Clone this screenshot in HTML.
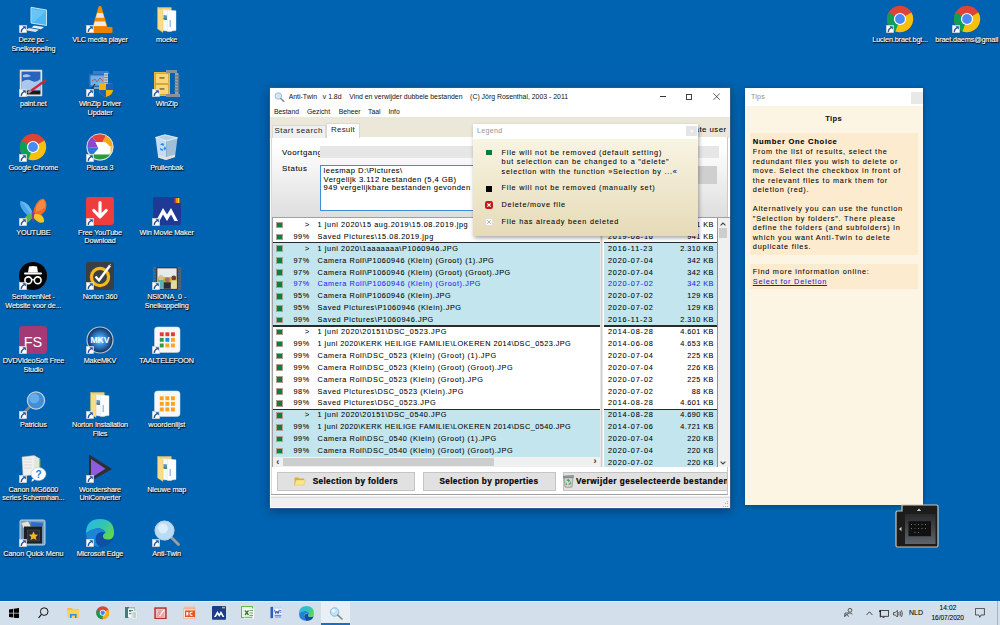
<!DOCTYPE html><html><head><meta charset="utf-8"><style>
*{margin:0;padding:0;box-sizing:border-box}
html,body{width:1000px;height:625px;overflow:hidden}
body{background:#0063b1;position:relative;font-family:"Liberation Sans",sans-serif;-webkit-text-stroke:.06px currentColor}
.a{position:absolute}
.lbl{position:absolute;width:80px;text-align:center;color:#fff;font-size:7.3px;line-height:8.9px;letter-spacing:-.15px;
 text-shadow:0 0 1px #000,0.5px 0.5px 1px #000,1px 1px 1px rgba(0,0,0,.5);white-space:nowrap;-webkit-text-stroke:.15px #fff}
.ico{position:absolute;width:28px;height:28px}
.sc{position:absolute;left:0;bottom:0;width:8px;height:8px;background:#fff;border:0.5px solid #aaa}
.win{position:absolute;background:#fff}
.t7{font-size:7px}
.vd{font-size:7.3px}
</style></head><body>
<div class="ico" style="left:19.33px;top:4.50px"><svg class="a" style="left:0;top:0" width="28" height="28" viewBox="0 0 28 28"><path d="M12 2.3 L27.5 5 V20.5 L12 18Z" fill="#4cb7f3" stroke="#d4ecfb" stroke-width="0.9"/><path d="M13 4 L26.5 6.3 L15 17 L13 16.6Z" fill="#7ccdf8" opacity=".6"/><path d="M15 20.5 L25 22 L22 24.3 L12.5 22.6Z" fill="#e9eef2"/><path d="M10 23 L20 24.7 L16.5 27 L6.5 25.2Z" fill="#dfe3e8"/></svg><svg class="a" style="left:-0.5px;top:20.5px" width="8" height="8" viewBox="0 0 8 8"><rect x="0.3" y="0.3" width="7.4" height="7.4" fill="#fff" stroke="#c8c8c8" stroke-width="0.5"/><path d="M3.4 1.2 H6.8 V4.6Z" fill="#1f4f9a"/><path d="M5.3 2.7 Q2.6 3.6 2.2 6.9" stroke="#1f4f9a" stroke-width="1.3" fill="none"/></svg></div>
<div class="lbl" style="left:-6.67px;top:35.80px">Deze pc -<br>Snelkoppeling</div>
<div class="ico" style="left:19.33px;top:68.75px"><svg class="a" style="left:0;top:0" width="28" height="28" viewBox="0 0 28 28"><rect x="1" y="1" width="22" height="26" fill="#f4f4f4" stroke="#b8b8b8" stroke-width=".6"/><rect x="2.5" y="2.5" width="19" height="19" fill="#2a62c0"/><path d="M2.5 13 Q8 9 13 12 Q17 14 21.5 10 V21.5 H2.5Z" fill="#a9c9ec"/><path d="M4 6 Q9 4 12 7 Q8 9 4 8Z" fill="#cfe0f4" opacity=".8"/><rect x="2.5" y="21.5" width="19" height="4" fill="#1a1a1a"/><path d="M9 24 L27 11" stroke="#c8283c" stroke-width="2.2"/><path d="M9 24 L12 21.6" stroke="#999" stroke-width="2.2"/></svg><svg class="a" style="left:-0.5px;top:20.5px" width="8" height="8" viewBox="0 0 8 8"><rect x="0.3" y="0.3" width="7.4" height="7.4" fill="#fff" stroke="#c8c8c8" stroke-width="0.5"/><path d="M3.4 1.2 H6.8 V4.6Z" fill="#1f4f9a"/><path d="M5.3 2.7 Q2.6 3.6 2.2 6.9" stroke="#1f4f9a" stroke-width="1.3" fill="none"/></svg></div>
<div class="lbl" style="left:-6.67px;top:100.05px">paint.net</div>
<div class="ico" style="left:19.33px;top:133.00px"><svg class="a" style="left:0;top:0" width="28" height="28" viewBox="0 0 28 28"><circle cx="14" cy="14" r="13.2" fill="#db4437"/><path d="M14 14 L2.6 7.4 A13.2 13.2 0 0 0 14 27.2 Z" fill="#0f9d58"/><path d="M14 14 L9 22.6 A13.2 13.2 0 0 0 14 27.2Z" fill="#0f9d58"/><path d="M14 14 L25.4 7.4 A13.2 13.2 0 0 1 9.4 26.4 Z" fill="#f4c20d"/><circle cx="14" cy="14" r="6.1" fill="#fff"/><circle cx="14" cy="14" r="4.9" fill="#4a8af4"/></svg><svg class="a" style="left:-0.5px;top:20.5px" width="8" height="8" viewBox="0 0 8 8"><rect x="0.3" y="0.3" width="7.4" height="7.4" fill="#fff" stroke="#c8c8c8" stroke-width="0.5"/><path d="M3.4 1.2 H6.8 V4.6Z" fill="#1f4f9a"/><path d="M5.3 2.7 Q2.6 3.6 2.2 6.9" stroke="#1f4f9a" stroke-width="1.3" fill="none"/></svg></div>
<div class="lbl" style="left:-6.67px;top:164.30px">Google Chrome</div>
<div class="ico" style="left:19.33px;top:197.25px"><svg class="a" style="left:0;top:0" width="28" height="28" viewBox="0 0 28 28"><path d="M14 17 Q10 5 1.5 4 Q0 7 3 12 Q7 19 14 21Z" fill="#4aa8e8"/><path d="M14 17 Q10 5 1.5 4 Q6 8 14 21Z" fill="#7cc4f0" opacity=".6"/><path d="M14 17 Q16 3 24 1.5 Q28.5 4 27 12 Q24 19 14 21Z" fill="#f06a28"/><path d="M17 10 Q20 3 24.5 2.5 Q27 5 26 10 Q22 14 17 15Z" fill="#f59a4a" opacity=".7"/><path d="M14 20 Q9 27 5.5 26 Q4 21 9 17.5 Q12 16.5 14 18Z" fill="#5ab848"/><path d="M14 20 Q20 28 25 25 Q26 19 19 17 Q16 16.5 14 18Z" fill="#f7c520"/><path d="M12.5 15 L15.5 15 L14.5 25 L13.5 25Z" fill="#8040a0"/></svg><svg class="a" style="left:-0.5px;top:20.5px" width="8" height="8" viewBox="0 0 8 8"><rect x="0.3" y="0.3" width="7.4" height="7.4" fill="#fff" stroke="#c8c8c8" stroke-width="0.5"/><path d="M3.4 1.2 H6.8 V4.6Z" fill="#1f4f9a"/><path d="M5.3 2.7 Q2.6 3.6 2.2 6.9" stroke="#1f4f9a" stroke-width="1.3" fill="none"/></svg></div>
<div class="lbl" style="left:-6.67px;top:228.55px">YOUTUBE</div>
<div class="ico" style="left:19.33px;top:261.50px"><svg class="a" style="left:0;top:0" width="28" height="28" viewBox="0 0 28 28"><circle cx="14" cy="14" r="14" fill="#050505"/><path d="M9 10.5 L10 4.5 Q14 3.5 18 4.5 L19 10.5Z" fill="#fff"/><rect x="5" y="10.5" width="18" height="2" rx="1" fill="#fff"/><circle cx="9.3" cy="18.3" r="3.4" fill="none" stroke="#fff" stroke-width="1.6"/><circle cx="18.7" cy="18.3" r="3.4" fill="none" stroke="#fff" stroke-width="1.6"/><path d="M12.7 18 Q14 17 15.3 18" stroke="#fff" stroke-width="1.2" fill="none"/></svg><svg class="a" style="left:-0.5px;top:20.5px" width="8" height="8" viewBox="0 0 8 8"><rect x="0.3" y="0.3" width="7.4" height="7.4" fill="#fff" stroke="#c8c8c8" stroke-width="0.5"/><path d="M3.4 1.2 H6.8 V4.6Z" fill="#1f4f9a"/><path d="M5.3 2.7 Q2.6 3.6 2.2 6.9" stroke="#1f4f9a" stroke-width="1.3" fill="none"/></svg></div>
<div class="lbl" style="left:-6.67px;top:292.80px">SeniorenNet -<br>Website voor de...</div>
<div class="ico" style="left:19.33px;top:325.75px"><svg class="a" style="left:0;top:0" width="28" height="28" viewBox="0 0 28 28"><rect x="0" y="0" width="28" height="28" rx="3.5" fill="#a33a74"/><text x="14" y="20.5" font-family="Liberation Sans" font-size="14.5" fill="#fff" text-anchor="middle">FS</text></svg><svg class="a" style="left:-0.5px;top:20.5px" width="8" height="8" viewBox="0 0 8 8"><rect x="0.3" y="0.3" width="7.4" height="7.4" fill="#fff" stroke="#c8c8c8" stroke-width="0.5"/><path d="M3.4 1.2 H6.8 V4.6Z" fill="#1f4f9a"/><path d="M5.3 2.7 Q2.6 3.6 2.2 6.9" stroke="#1f4f9a" stroke-width="1.3" fill="none"/></svg></div>
<div class="lbl" style="left:-6.67px;top:357.05px">DVDVideoSoft Free<br>Studio</div>
<div class="ico" style="left:19.33px;top:390.00px"><svg class="a" style="left:0;top:0" width="28" height="28" viewBox="0 0 28 28"><path d="M10.5 17 L4.5 23.5" stroke="#7d8790" stroke-width="2.6" stroke-linecap="round"/><circle cx="17" cy="10.5" r="8.6" fill="#3f8fd8" stroke="#c4d4e4" stroke-width="1.2"/><circle cx="15.3" cy="8.5" r="5" fill="#7ab8ec" opacity=".7"/></svg><svg class="a" style="left:-0.5px;top:20.5px" width="8" height="8" viewBox="0 0 8 8"><rect x="0.3" y="0.3" width="7.4" height="7.4" fill="#fff" stroke="#c8c8c8" stroke-width="0.5"/><path d="M3.4 1.2 H6.8 V4.6Z" fill="#1f4f9a"/><path d="M5.3 2.7 Q2.6 3.6 2.2 6.9" stroke="#1f4f9a" stroke-width="1.3" fill="none"/></svg></div>
<div class="lbl" style="left:-6.67px;top:421.30px">Patricius</div>
<div class="ico" style="left:19.33px;top:454.25px"><svg class="a" style="left:0;top:0" width="28" height="28" viewBox="0 0 28 28"><path d="M3 3 L15 1.5 L21 5 V20 L4 22Z" fill="#f0f0f0" stroke="#bbb" stroke-width=".5"/><path d="M15 1.5 L21 5 V20 L15 17Z" fill="#dfe8df"/><path d="M21 5 V20" stroke="#3a8a4a" stroke-width="1"/><path d="M5 5 h8 M5 8 h8 M5 11 h8 M5 14 h8" stroke="#ccc" stroke-width=".6"/><ellipse cx="19.5" cy="20" rx="7.5" ry="6.5" fill="#fff" stroke="#c0c8d0" stroke-width=".6"/><path d="M13 25 L12.5 28 L16 25.5Z" fill="#fff"/><text x="19.5" y="24.3" font-family="Liberation Sans" font-weight="bold" font-size="10" fill="#2a7ae0" text-anchor="middle">?</text></svg><svg class="a" style="left:-0.5px;top:20.5px" width="8" height="8" viewBox="0 0 8 8"><rect x="0.3" y="0.3" width="7.4" height="7.4" fill="#fff" stroke="#c8c8c8" stroke-width="0.5"/><path d="M3.4 1.2 H6.8 V4.6Z" fill="#1f4f9a"/><path d="M5.3 2.7 Q2.6 3.6 2.2 6.9" stroke="#1f4f9a" stroke-width="1.3" fill="none"/></svg></div>
<div class="lbl" style="left:-6.67px;top:485.55px">Canon MG6600<br>series Schermhan...</div>
<div class="ico" style="left:19.33px;top:518.50px"><svg class="a" style="left:0;top:0" width="28" height="28" viewBox="0 0 28 28"><rect x="1" y="1" width="25" height="25" rx="1.5" fill="#86acc8" stroke="#b8d0e4" stroke-width="1"/><rect x="2.5" y="2.5" width="22" height="22" fill="#6a94b8"/><path d="M12 3 L24 4 L23.5 7.5 L11.5 7Z" fill="#2f6ad8"/><path d="M2.5 4 L9 2.5 L12 8 L4.5 9Z" fill="#e8e4d4"/><rect x="5" y="7.5" width="18" height="17" fill="#1c1f24"/><rect x="8.5" y="11" width="12" height="11" fill="#2a2f36" stroke="#4a5058" stroke-width=".6"/><path d="M14.5 12.5 l1.4 3 l3.2 .3 l-2.4 2.1 l.8 3.2 l-3 -1.7 l-3 1.7 l.8 -3.2 l-2.4 -2.1 l3.2 -.3z" fill="#f7b81c"/></svg><svg class="a" style="left:-0.5px;top:20.5px" width="8" height="8" viewBox="0 0 8 8"><rect x="0.3" y="0.3" width="7.4" height="7.4" fill="#fff" stroke="#c8c8c8" stroke-width="0.5"/><path d="M3.4 1.2 H6.8 V4.6Z" fill="#1f4f9a"/><path d="M5.3 2.7 Q2.6 3.6 2.2 6.9" stroke="#1f4f9a" stroke-width="1.3" fill="none"/></svg></div>
<div class="lbl" style="left:-6.67px;top:549.80px">Canon Quick Menu</div>
<div class="ico" style="left:86.00px;top:4.50px"><svg class="a" style="left:0;top:0" width="28" height="28" viewBox="0 0 28 28"><path d="M14 1 Q15.3 1 15.6 2.2 L21.5 22 H6.5 L12.4 2.2 Q12.7 1 14 1Z" fill="#f28b00"/><path d="M11.2 8 H16.8 L18.2 12.8 H9.8Z" fill="#e8e8e8"/><path d="M8.8 16.5 H19.2 L20.5 21 H7.5Z" fill="#ececec"/><path d="M2.5 22 H25.5 Q26.5 22 26.5 23 V27 Q26.5 28 25.5 28 H2.5 Q1.5 28 1.5 27 V23 Q1.5 22 2.5 22Z" fill="#f08000"/></svg><svg class="a" style="left:-0.5px;top:20.5px" width="8" height="8" viewBox="0 0 8 8"><rect x="0.3" y="0.3" width="7.4" height="7.4" fill="#fff" stroke="#c8c8c8" stroke-width="0.5"/><path d="M3.4 1.2 H6.8 V4.6Z" fill="#1f4f9a"/><path d="M5.3 2.7 Q2.6 3.6 2.2 6.9" stroke="#1f4f9a" stroke-width="1.3" fill="none"/></svg></div>
<div class="lbl" style="left:60.00px;top:35.80px">VLC media player</div>
<div class="ico" style="left:86.00px;top:68.75px"><svg class="a" style="left:0;top:0" width="28" height="28" viewBox="0 0 28 28"><path d="M7 2 h15 l2 3 h-17z" fill="#2f7fd0"/><rect x="3" y="5" width="17" height="13" fill="#2c6cb8"/><rect x="4.5" y="6.5" width="14" height="10" fill="#6fb0e8"/><path d="M6 12 l3 -2 l2 3 l3 -4 l3 3" stroke="#c84a3a" stroke-width=".8" fill="none"/><rect x="8" y="18" width="7" height="2" fill="#8a9aaa"/><path d="M2 25 L9 15" stroke="#333" stroke-width="1.2"/><rect x="18" y="4" width="4" height="14" fill="#c0c8d0"/><path d="M18.3 6 h3.4 M18.3 8.5 h3.4 M18.3 11 h3.4 M18.3 13.5 h3.4" stroke="#5a6a7a" stroke-width=".7"/><path d="M20 15 L27 14 V21 Q27 26 20 28 Q13 26 13 21 V14Z" fill="#f4b400"/><path d="M20 15 L27 14 V21 H20Z" fill="#1f5fb8"/><path d="M13 21 H20 V28 Q13 26 13 21Z" fill="#1f5fb8"/></svg><svg class="a" style="left:-0.5px;top:20.5px" width="8" height="8" viewBox="0 0 8 8"><rect x="0.3" y="0.3" width="7.4" height="7.4" fill="#fff" stroke="#c8c8c8" stroke-width="0.5"/><path d="M3.4 1.2 H6.8 V4.6Z" fill="#1f4f9a"/><path d="M5.3 2.7 Q2.6 3.6 2.2 6.9" stroke="#1f4f9a" stroke-width="1.3" fill="none"/></svg></div>
<div class="lbl" style="left:60.00px;top:100.05px">WinZip Driver<br>Updater</div>
<div class="ico" style="left:86.00px;top:133.00px"><svg class="a" style="left:0;top:0" width="28" height="28" viewBox="0 0 28 28"><circle cx="14" cy="14" r="13.3" fill="#f4f4f4"/><path d="M14 14 L6 3.3 A13 13 0 0 1 20 2.5Z" fill="#e94235"/><path d="M14 14 L20 2.5 A13 13 0 0 1 27 13Z" fill="#f9a51a"/><path d="M14 14 L27 13 A13 13 0 0 1 24.5 21.5Z" fill="#fbc02d"/><path d="M7 21.5 H24.5 A13 13 0 0 1 4 22Z" fill="#2d9a3a"/><path d="M14 14 L7 21.5 H4 A13 13 0 0 1 1.3 15Z" fill="#2f78d2"/><path d="M14 14 L1.3 15 A13 13 0 0 1 6 3.3Z" fill="#9146c8"/><path d="M9.5 9 L20 9.5 L24.5 14 V20.5 H8.5 L12.5 15.5Z" fill="#fff"/><path d="M9.5 9 L20 9.5 L12.5 15.5Z" fill="#fff"/><circle cx="14" cy="14" r="13.2" fill="none" stroke="#dde3ea" stroke-width=".8"/></svg><svg class="a" style="left:-0.5px;top:20.5px" width="8" height="8" viewBox="0 0 8 8"><rect x="0.3" y="0.3" width="7.4" height="7.4" fill="#fff" stroke="#c8c8c8" stroke-width="0.5"/><path d="M3.4 1.2 H6.8 V4.6Z" fill="#1f4f9a"/><path d="M5.3 2.7 Q2.6 3.6 2.2 6.9" stroke="#1f4f9a" stroke-width="1.3" fill="none"/></svg></div>
<div class="lbl" style="left:60.00px;top:164.30px">Picasa 3</div>
<div class="ico" style="left:86.00px;top:197.25px"><svg class="a" style="left:0;top:0" width="28" height="28" viewBox="0 0 28 28"><rect x="0" y="0" width="28" height="28" rx="3" fill="#ef3d3d"/><path d="M14 5.5 V19.5 M7.8 13.5 L14 19.8 L20.2 13.5" stroke="#fff" stroke-width="3.2" stroke-linecap="round" stroke-linejoin="round" fill="none"/></svg><svg class="a" style="left:-0.5px;top:20.5px" width="8" height="8" viewBox="0 0 8 8"><rect x="0.3" y="0.3" width="7.4" height="7.4" fill="#fff" stroke="#c8c8c8" stroke-width="0.5"/><path d="M3.4 1.2 H6.8 V4.6Z" fill="#1f4f9a"/><path d="M5.3 2.7 Q2.6 3.6 2.2 6.9" stroke="#1f4f9a" stroke-width="1.3" fill="none"/></svg></div>
<div class="lbl" style="left:60.00px;top:228.55px">Free YouTube<br>Download</div>
<div class="ico" style="left:86.00px;top:261.50px"><svg class="a" style="left:0;top:0" width="28" height="28" viewBox="0 0 28 28"><rect x="0" y="0" width="28" height="28" rx="2.5" fill="#3a3f47"/><circle cx="14" cy="15" r="8.6" fill="none" stroke="#f8b81c" stroke-width="3.2"/><path d="M9.5 14.5 L13 18.3 L24 3.5" stroke="#fff" stroke-width="2.4" fill="none"/><path d="M22 4.5 L25 2" stroke="#ccc" stroke-width=".8"/></svg><svg class="a" style="left:-0.5px;top:20.5px" width="8" height="8" viewBox="0 0 8 8"><rect x="0.3" y="0.3" width="7.4" height="7.4" fill="#fff" stroke="#c8c8c8" stroke-width="0.5"/><path d="M3.4 1.2 H6.8 V4.6Z" fill="#1f4f9a"/><path d="M5.3 2.7 Q2.6 3.6 2.2 6.9" stroke="#1f4f9a" stroke-width="1.3" fill="none"/></svg></div>
<div class="lbl" style="left:60.00px;top:292.80px">Norton 360</div>
<div class="ico" style="left:86.00px;top:325.75px"><svg class="a" style="left:0;top:0" width="28" height="28" viewBox="0 0 28 28"><defs><radialGradient id="mkg"><stop offset="0" stop-color="#cfe8ff"/><stop offset=".35" stop-color="#3a9ae8"/><stop offset="1" stop-color="#0e2a5a"/></radialGradient></defs><circle cx="14" cy="14" r="13" fill="url(#mkg)" stroke="#b8c4d0" stroke-width="1.2"/><text x="14" y="17.3" font-family="Liberation Sans" font-weight="bold" font-size="8.6" fill="#fff" text-anchor="middle" style="-webkit-text-stroke:0">MKV</text></svg><svg class="a" style="left:-0.5px;top:20.5px" width="8" height="8" viewBox="0 0 8 8"><rect x="0.3" y="0.3" width="7.4" height="7.4" fill="#fff" stroke="#c8c8c8" stroke-width="0.5"/><path d="M3.4 1.2 H6.8 V4.6Z" fill="#1f4f9a"/><path d="M5.3 2.7 Q2.6 3.6 2.2 6.9" stroke="#1f4f9a" stroke-width="1.3" fill="none"/></svg></div>
<div class="lbl" style="left:60.00px;top:357.05px">MakeMKV</div>
<div class="ico" style="left:86.00px;top:390.00px"><svg class="a" style="left:0;top:0" width="28" height="28" viewBox="0 0 28 28"><path d="M4.7 2.3 H18.5 V24 H4.7Z" fill="#f2cf6e"/><path d="M9 4.5 L18.5 5.5 V26.5 L9 25.5Z" fill="#f6f7f9" stroke="#dfe2e6" stroke-width=".4"/><path d="M10.5 10 L14 10.5 V15 L10.5 14.5Z" fill="#5b92c9"/><path d="M10.5 13 L14 13.5 V15 L10.5 14.5Z" fill="#3f8a4a"/><path d="M14.5 5 L23 5.8 V25.5 L14.5 26.5Z" fill="#fbfcfd" stroke="#e0e3e6" stroke-width=".4"/><path d="M16.5 15 L18 15 V22 L16.5 22Z" fill="#9cc2e4"/><path d="M4.7 2.3 L10 5.5 V27.5 L4.7 24Z" fill="#f7dc8a"/><path d="M4.7 2.3 L10 5.5 V27.5 L4.7 24Z" fill="none" stroke="#e2bc55" stroke-width=".4"/></svg><svg class="a" style="left:-0.5px;top:20.5px" width="8" height="8" viewBox="0 0 8 8"><rect x="0.3" y="0.3" width="7.4" height="7.4" fill="#fff" stroke="#c8c8c8" stroke-width="0.5"/><path d="M3.4 1.2 H6.8 V4.6Z" fill="#1f4f9a"/><path d="M5.3 2.7 Q2.6 3.6 2.2 6.9" stroke="#1f4f9a" stroke-width="1.3" fill="none"/></svg></div>
<div class="lbl" style="left:60.00px;top:421.30px">Norton Installation<br>Files</div>
<div class="ico" style="left:86.00px;top:454.25px"><svg class="a" style="left:0;top:0" width="28" height="28" viewBox="0 0 28 28"><path d="M3 0.5 L26 15 L3 28Z" fill="#2e2e30"/><path d="M5 5 L19.5 14.7 L5 24Z" fill="#8d5ae0"/></svg><svg class="a" style="left:-0.5px;top:20.5px" width="8" height="8" viewBox="0 0 8 8"><rect x="0.3" y="0.3" width="7.4" height="7.4" fill="#fff" stroke="#c8c8c8" stroke-width="0.5"/><path d="M3.4 1.2 H6.8 V4.6Z" fill="#1f4f9a"/><path d="M5.3 2.7 Q2.6 3.6 2.2 6.9" stroke="#1f4f9a" stroke-width="1.3" fill="none"/></svg></div>
<div class="lbl" style="left:60.00px;top:485.55px">Wondershare<br>UniConverter</div>
<div class="ico" style="left:86.00px;top:518.50px"><svg class="a" style="left:0;top:0" width="28" height="28" viewBox="0 0 28 28"><defs><linearGradient id="eg1" x1="0" y1="0" x2="1" y2=".7"><stop offset="0" stop-color="#29b6f0"/><stop offset=".55" stop-color="#33c4b4"/><stop offset="1" stop-color="#62d84a"/></linearGradient></defs><path d="M0 12.5 Q1 0 14 0 Q28 0 28 14 Q28 19 24 20.5 Q18.5 21.5 17 18.5 Q16 15.5 19.5 13.5 Q16 8.5 10 9.5 Q4 10.5 0 14Z" fill="url(#eg1)"/><path d="M0 14 Q4 10.5 10 9.5 Q16 8.5 19.5 13.5 Q13 12 10.5 16 Q8 21 12 26 L14 28 Q0 27 0 14Z" fill="#1d84d8"/><path d="M14 28 Q8 23 10.5 17 Q12.5 12.5 19.5 13.5 Q16 15.5 17 18.5 Q18.5 21.5 24 20.5 Q26.5 20 27.5 17.5 Q26 27 14 28Z" fill="#0f4fa6"/></svg><svg class="a" style="left:-0.5px;top:20.5px" width="8" height="8" viewBox="0 0 8 8"><rect x="0.3" y="0.3" width="7.4" height="7.4" fill="#fff" stroke="#c8c8c8" stroke-width="0.5"/><path d="M3.4 1.2 H6.8 V4.6Z" fill="#1f4f9a"/><path d="M5.3 2.7 Q2.6 3.6 2.2 6.9" stroke="#1f4f9a" stroke-width="1.3" fill="none"/></svg></div>
<div class="lbl" style="left:60.00px;top:549.80px">Microsoft Edge</div>
<div class="ico" style="left:152.67px;top:4.50px"><svg class="a" style="left:0;top:0" width="28" height="28" viewBox="0 0 28 28"><path d="M4.7 2.3 H18.5 V24 H4.7Z" fill="#f2cf6e"/><path d="M9 4.5 L18.5 5.5 V26.5 L9 25.5Z" fill="#f6f7f9" stroke="#dfe2e6" stroke-width=".4"/><path d="M10.5 10 L14 10.5 V15 L10.5 14.5Z" fill="#5b92c9"/><path d="M10.5 13 L14 13.5 V15 L10.5 14.5Z" fill="#3f8a4a"/><path d="M14.5 5 L23 5.8 V25.5 L14.5 26.5Z" fill="#fbfcfd" stroke="#e0e3e6" stroke-width=".4"/><path d="M16.5 15 L18 15 V22 L16.5 22Z" fill="#9cc2e4"/><path d="M4.7 2.3 L10 5.5 V27.5 L4.7 24Z" fill="#f7dc8a"/><path d="M4.7 2.3 L10 5.5 V27.5 L4.7 24Z" fill="none" stroke="#e2bc55" stroke-width=".4"/></svg></div>
<div class="lbl" style="left:126.67px;top:35.80px">moeke</div>
<div class="ico" style="left:152.67px;top:68.75px"><svg class="a" style="left:0;top:0" width="28" height="28" viewBox="0 0 28 28"><rect x="1" y="3" width="16" height="24" fill="#e9b93e"/><rect x="2.3" y="4.5" width="13.4" height="10" fill="#f7d77a" stroke="#b98a20" stroke-width=".5"/><rect x="2.3" y="15.5" width="13.4" height="10" fill="#f7d77a" stroke="#b98a20" stroke-width=".5"/><rect x="6.5" y="8.3" width="5" height="1.3" fill="#7a5a1a"/><rect x="6.5" y="19.3" width="5" height="1.3" fill="#7a5a1a"/><path d="M13 1 H24 V4 H13Z M13 25 H27 V28 H13Z" fill="#8b9098"/><rect x="22" y="4" width="3.5" height="21" fill="#9aa0a8"/><path d="M21 7 h6 M21 10 h6 M21 13 h6 M21 16 h6 M21 19 h6 M21 22 h6" stroke="#686e76" stroke-width="1"/></svg><svg class="a" style="left:-0.5px;top:20.5px" width="8" height="8" viewBox="0 0 8 8"><rect x="0.3" y="0.3" width="7.4" height="7.4" fill="#fff" stroke="#c8c8c8" stroke-width="0.5"/><path d="M3.4 1.2 H6.8 V4.6Z" fill="#1f4f9a"/><path d="M5.3 2.7 Q2.6 3.6 2.2 6.9" stroke="#1f4f9a" stroke-width="1.3" fill="none"/></svg></div>
<div class="lbl" style="left:126.67px;top:100.05px">WinZip</div>
<div class="ico" style="left:152.67px;top:133.00px"><svg class="a" style="left:0;top:0" width="28" height="28" viewBox="0 0 28 28"><path d="M2.5 4.5 L13.8 7.8 L13 27 L5.2 24.5Z" fill="#c6ddef"/><path d="M13.8 7.8 L24.5 4.8 L22 24 L13 27Z" fill="#a2bfd8"/><path d="M2.5 4.5 L12 1.8 L24.5 4.8 L13.8 7.8Z" fill="#b4cfe4" stroke="#eaf4fb" stroke-width=".9"/><path d="M5.2 22 L13 24.3 L22 21.5 L22 24 L13 27 L5.2 24.5Z" fill="#e6e2dc"/><path d="M7 11.5 l2.2 -1.6 l2 1.2 l-.8 1.8 l-1.4 -.7z M11.8 13 l1.3 2.6 l-1.6 1.8 l-1 -1.5z M6.8 14.5 l.6 2.6 l2.6 .8 l-.1 -1.6 l-1.6 -.5z" fill="#2f86e0"/></svg></div>
<div class="lbl" style="left:126.67px;top:164.30px">Prullenbak</div>
<div class="ico" style="left:152.67px;top:197.25px"><svg class="a" style="left:0;top:0" width="28" height="28" viewBox="0 0 28 28"><rect x="0" y="0" width="28" height="28" rx="2.5" fill="#1e3a94"/><path d="M3 24 L10 11 L14 17.5 L18 11 L25 24 H21.5 L18 17.5 L14 24 L10 17.5 L6.5 24Z" fill="#fff"/><path d="M21.5 1 h1.5 v5 h-1.5z" fill="#e53935"/><path d="M23 1 h1.5 v5 h-1.5z" fill="#fb8c00"/><path d="M24.5 1 h1.5 v5 h-1.5z" fill="#fdd835"/><path d="M26 1 h1.2 v5 h-1.2z" fill="#43a047"/></svg><svg class="a" style="left:-0.5px;top:20.5px" width="8" height="8" viewBox="0 0 8 8"><rect x="0.3" y="0.3" width="7.4" height="7.4" fill="#fff" stroke="#c8c8c8" stroke-width="0.5"/><path d="M3.4 1.2 H6.8 V4.6Z" fill="#1f4f9a"/><path d="M5.3 2.7 Q2.6 3.6 2.2 6.9" stroke="#1f4f9a" stroke-width="1.3" fill="none"/></svg></div>
<div class="lbl" style="left:126.67px;top:228.55px">Win Movie Maker</div>
<div class="ico" style="left:152.67px;top:261.50px"><svg class="a" style="left:0;top:0" width="28" height="28" viewBox="0 0 28 28"><rect x="0" y="5" width="28" height="23" fill="#5a6470"/><rect x="1" y="6.5" width="1.6" height="1.5" fill="#0a64b4"/><rect x="25.5" y="6.5" width="1.6" height="1.5" fill="#0a64b4"/><rect x="1" y="9.5" width="1.6" height="1.5" fill="#0a64b4"/><rect x="25.5" y="9.5" width="1.6" height="1.5" fill="#0a64b4"/><rect x="1" y="12.5" width="1.6" height="1.5" fill="#0a64b4"/><rect x="25.5" y="12.5" width="1.6" height="1.5" fill="#0a64b4"/><rect x="1" y="15.5" width="1.6" height="1.5" fill="#0a64b4"/><rect x="25.5" y="15.5" width="1.6" height="1.5" fill="#0a64b4"/><rect x="1" y="18.5" width="1.6" height="1.5" fill="#0a64b4"/><rect x="25.5" y="18.5" width="1.6" height="1.5" fill="#0a64b4"/><rect x="1" y="21.5" width="1.6" height="1.5" fill="#0a64b4"/><rect x="25.5" y="21.5" width="1.6" height="1.5" fill="#0a64b4"/><rect x="1" y="24.5" width="1.6" height="1.5" fill="#0a64b4"/><rect x="25.5" y="24.5" width="1.6" height="1.5" fill="#0a64b4"/><rect x="3.5" y="5.5" width="21" height="22" fill="#161616"/><rect x="4.3" y="6.3" width="19.4" height="20.4" fill="#e6eaea"/><rect x="4.3" y="15" width="19.4" height="7" fill="#d6ae3c"/><circle cx="8" cy="15.5" r="2.6" fill="#e2bc94"/><rect x="5" y="18" width="6" height="8.7" fill="#5cb0b4"/><circle cx="20.8" cy="16" r="2.4" fill="#6a4232"/><rect x="18.3" y="18.5" width="5.4" height="8.2" fill="#e6dca0"/><circle cx="14.3" cy="18" r="2.4" fill="#9a7458"/><rect x="10.8" y="20.3" width="7" height="6.4" fill="#2a2c38"/></svg><svg class="a" style="left:-0.5px;top:20.5px" width="8" height="8" viewBox="0 0 8 8"><rect x="0.3" y="0.3" width="7.4" height="7.4" fill="#fff" stroke="#c8c8c8" stroke-width="0.5"/><path d="M3.4 1.2 H6.8 V4.6Z" fill="#1f4f9a"/><path d="M5.3 2.7 Q2.6 3.6 2.2 6.9" stroke="#1f4f9a" stroke-width="1.3" fill="none"/></svg></div>
<div class="lbl" style="left:126.67px;top:292.80px">NSIONA_0 -<br>Snelkoppeling</div>
<div class="ico" style="left:152.67px;top:325.75px"><svg class="a" style="left:0;top:0" width="28" height="28" viewBox="0 0 28 28"><rect x="1.5" y="1" width="25.5" height="25.5" rx="3" fill="#f7f7f7" stroke="#dcdcdc" stroke-width=".5"/><rect x="6.8" y="6.3" width="3.9" height="3.9" fill="#e53935"/><rect x="12.4" y="6.3" width="3.9" height="3.9" fill="#e53935"/><rect x="18.0" y="6.3" width="3.9" height="3.9" fill="#e53935"/><rect x="6.8" y="11.9" width="3.9" height="3.9" fill="#2e9a4a"/><rect x="12.4" y="11.9" width="3.9" height="3.9" fill="#1e88e5"/><rect x="18.0" y="11.9" width="3.9" height="3.9" fill="#f9a825"/><rect x="6.8" y="17.5" width="3.9" height="3.9" fill="#2e9a4a"/><rect x="12.4" y="17.5" width="3.9" height="3.9" fill="#f9a825"/><rect x="18.0" y="17.5" width="3.9" height="3.9" fill="#f9a825"/></svg><svg class="a" style="left:-0.5px;top:20.5px" width="8" height="8" viewBox="0 0 8 8"><rect x="0.3" y="0.3" width="7.4" height="7.4" fill="#fff" stroke="#c8c8c8" stroke-width="0.5"/><path d="M3.4 1.2 H6.8 V4.6Z" fill="#1f4f9a"/><path d="M5.3 2.7 Q2.6 3.6 2.2 6.9" stroke="#1f4f9a" stroke-width="1.3" fill="none"/></svg></div>
<div class="lbl" style="left:126.67px;top:357.05px">TAALTELEFOON</div>
<div class="ico" style="left:152.67px;top:390.00px"><svg class="a" style="left:0;top:0" width="28" height="28" viewBox="0 0 28 28"><rect x="1.5" y="1" width="25.5" height="25.5" rx="3" fill="#f7f7f7" stroke="#dcdcdc" stroke-width=".5"/><rect x="6.8" y="6.3" width="3.9" height="3.9" fill="#f9a31a"/><rect x="12.4" y="6.3" width="3.9" height="3.9" fill="#f9a31a"/><rect x="18.0" y="6.3" width="3.9" height="3.9" fill="#f9a31a"/><rect x="6.8" y="11.9" width="3.9" height="3.9" fill="#f9a31a"/><rect x="12.4" y="11.9" width="3.9" height="3.9" fill="#f9a31a"/><rect x="18.0" y="11.9" width="3.9" height="3.9" fill="#f9a31a"/><rect x="6.8" y="17.5" width="3.9" height="3.9" fill="#f9a31a"/><rect x="12.4" y="17.5" width="3.9" height="3.9" fill="#f9a31a"/><rect x="18.0" y="17.5" width="3.9" height="3.9" fill="#f9a31a"/></svg><svg class="a" style="left:-0.5px;top:20.5px" width="8" height="8" viewBox="0 0 8 8"><rect x="0.3" y="0.3" width="7.4" height="7.4" fill="#fff" stroke="#c8c8c8" stroke-width="0.5"/><path d="M3.4 1.2 H6.8 V4.6Z" fill="#1f4f9a"/><path d="M5.3 2.7 Q2.6 3.6 2.2 6.9" stroke="#1f4f9a" stroke-width="1.3" fill="none"/></svg></div>
<div class="lbl" style="left:126.67px;top:421.30px">woordenlijst</div>
<div class="ico" style="left:152.67px;top:454.25px"><svg class="a" style="left:0;top:0" width="28" height="28" viewBox="0 0 28 28"><path d="M4.7 2.3 H18.5 V24 H4.7Z" fill="#f2cf6e"/><path d="M9 4.5 L18.5 5.5 V26.5 L9 25.5Z" fill="#f6f7f9" stroke="#dfe2e6" stroke-width=".4"/><path d="M10.5 10 L14 10.5 V15 L10.5 14.5Z" fill="#5b92c9"/><path d="M10.5 13 L14 13.5 V15 L10.5 14.5Z" fill="#3f8a4a"/><path d="M14.5 5 L23 5.8 V25.5 L14.5 26.5Z" fill="#fbfcfd" stroke="#e0e3e6" stroke-width=".4"/><path d="M16.5 15 L18 15 V22 L16.5 22Z" fill="#9cc2e4"/><path d="M4.7 2.3 L10 5.5 V27.5 L4.7 24Z" fill="#f7dc8a"/><path d="M4.7 2.3 L10 5.5 V27.5 L4.7 24Z" fill="none" stroke="#e2bc55" stroke-width=".4"/></svg></div>
<div class="lbl" style="left:126.67px;top:485.55px">Nieuwe map</div>
<div class="ico" style="left:152.67px;top:518.50px"><svg class="a" style="left:0;top:0" width="28" height="28" viewBox="0 0 28 28"><path d="M17.5 17.5 L25.5 25.5" stroke="#9aa0a8" stroke-width="2.8" stroke-linecap="round"/><circle cx="11.5" cy="11.5" r="9.3" fill="#b8dcf6" stroke="#d8e4ee" stroke-width="1.4"/><circle cx="11.5" cy="11.5" r="9.3" fill="none" stroke="#8ab0cc" stroke-width=".5"/><circle cx="10" cy="9.5" r="5" fill="#e4f3fd" opacity=".8"/></svg><svg class="a" style="left:-0.5px;top:20.5px" width="8" height="8" viewBox="0 0 8 8"><rect x="0.3" y="0.3" width="7.4" height="7.4" fill="#fff" stroke="#c8c8c8" stroke-width="0.5"/><path d="M3.4 1.2 H6.8 V4.6Z" fill="#1f4f9a"/><path d="M5.3 2.7 Q2.6 3.6 2.2 6.9" stroke="#1f4f9a" stroke-width="1.3" fill="none"/></svg></div>
<div class="lbl" style="left:126.67px;top:549.80px">Anti-Twin</div>
<div class="ico" style="left:886.04px;top:4.50px"><svg class="a" style="left:0;top:0" width="28" height="28" viewBox="0 0 28 28"><circle cx="14" cy="14" r="13.2" fill="#db4437"/><path d="M14 14 L2.6 7.4 A13.2 13.2 0 0 0 14 27.2 Z" fill="#0f9d58"/><path d="M14 14 L9 22.6 A13.2 13.2 0 0 0 14 27.2Z" fill="#0f9d58"/><path d="M14 14 L25.4 7.4 A13.2 13.2 0 0 1 9.4 26.4 Z" fill="#f4c20d"/><circle cx="14" cy="14" r="6.1" fill="#fff"/><circle cx="14" cy="14" r="4.9" fill="#4a8af4"/></svg><svg class="a" style="left:-0.5px;top:20.5px" width="8" height="8" viewBox="0 0 8 8"><rect x="0.3" y="0.3" width="7.4" height="7.4" fill="#fff" stroke="#c8c8c8" stroke-width="0.5"/><path d="M3.4 1.2 H6.8 V4.6Z" fill="#1f4f9a"/><path d="M5.3 2.7 Q2.6 3.6 2.2 6.9" stroke="#1f4f9a" stroke-width="1.3" fill="none"/></svg></div>
<div class="lbl" style="left:860.04px;top:35.80px">Lucien.braet.bgt...</div>
<div class="ico" style="left:952.71px;top:4.50px"><svg class="a" style="left:0;top:0" width="28" height="28" viewBox="0 0 28 28"><circle cx="14" cy="14" r="13.2" fill="#db4437"/><path d="M14 14 L2.6 7.4 A13.2 13.2 0 0 0 14 27.2 Z" fill="#0f9d58"/><path d="M14 14 L9 22.6 A13.2 13.2 0 0 0 14 27.2Z" fill="#0f9d58"/><path d="M14 14 L25.4 7.4 A13.2 13.2 0 0 1 9.4 26.4 Z" fill="#f4c20d"/><circle cx="14" cy="14" r="6.1" fill="#fff"/><circle cx="14" cy="14" r="4.9" fill="#4a8af4"/></svg><svg class="a" style="left:-0.5px;top:20.5px" width="8" height="8" viewBox="0 0 8 8"><rect x="0.3" y="0.3" width="7.4" height="7.4" fill="#fff" stroke="#c8c8c8" stroke-width="0.5"/><path d="M3.4 1.2 H6.8 V4.6Z" fill="#1f4f9a"/><path d="M5.3 2.7 Q2.6 3.6 2.2 6.9" stroke="#1f4f9a" stroke-width="1.3" fill="none"/></svg></div>
<div class="lbl" style="left:926.71px;top:35.80px">braet.daems@gmail</div>
<div class="a" style="left:269.00px;top:87.00px;width:462.00px;height:422.00px;box-shadow:0 2px 10px rgba(0,0,0,.35);background:#fff;border:1px solid #2c5a88"></div>
<div class="a" style="left:270.00px;top:88.00px;width:460.00px;height:420.00px;background:#fff"></div>
<svg class="a" style="left:274px;top:92px" width="11" height="10" viewBox="0 0 11 10"><circle cx="4.3" cy="4" r="3.3" fill="#cfe6f7" stroke="#8fb4d4" stroke-width=".8"/><path d="M6.8 6.5 L9.8 9.3" stroke="#8a8f96" stroke-width="1.6" stroke-linecap="round"/></svg>
<div class="a " style="left:288.70px;top:92.30px;line-height:10px;white-space:nowrap;font-size:6.9px;color:#111;-webkit-text-stroke:0">Anti-Twin&nbsp;&nbsp; v 1.8d&nbsp;&nbsp;&nbsp; Vind en verwijder dubbele bestanden&nbsp;&nbsp;&nbsp; (C) J&ouml;rg Rosenthal, 2003 - 2011</div>
<div class="a" style="left:659.60px;top:96.00px;width:6.50px;height:0.80px;background:#333"></div>
<div class="a" style="left:686.20px;top:93.50px;width:6.20px;height:6.20px;border:0.7px solid #444"></div>
<svg class="a" style="left:713px;top:93px" width="7.4" height="7.2" viewBox="0 0 7 7"><path d="M0.3 0.3 L6.7 6.7 M6.7 0.3 L0.3 6.7" stroke="#333" stroke-width=".75"/></svg>
<div class="a " style="left:274.00px;top:106.70px;line-height:10px;white-space:nowrap;font-size:6.8px;color:#111;-webkit-text-stroke:0">Bestand</div>
<div class="a " style="left:307.00px;top:106.70px;line-height:10px;white-space:nowrap;font-size:6.8px;color:#111;-webkit-text-stroke:0">Gezicht</div>
<div class="a " style="left:338.70px;top:106.70px;line-height:10px;white-space:nowrap;font-size:6.8px;color:#111;-webkit-text-stroke:0">Beheer</div>
<div class="a " style="left:368.00px;top:106.70px;line-height:10px;white-space:nowrap;font-size:6.8px;color:#111;-webkit-text-stroke:0">Taal</div>
<div class="a " style="left:388.40px;top:106.70px;line-height:10px;white-space:nowrap;font-size:6.8px;color:#111;-webkit-text-stroke:0">Info</div>
<div class="a" style="left:270.00px;top:117.30px;width:460.00px;height:20.50px;background:#ece8d9"></div>
<div class="a" style="left:270.50px;top:137.40px;width:457.50px;height:357.00px;background:linear-gradient(#fff 0px,#fff 8px,#dedede 80px,#dedede 329px,#fff 329px);border-left:1px solid #d8d8d8;border-right:1px solid #c8c8c8"></div>
<div class="a" style="left:271.60px;top:125.00px;width:54.50px;height:12.60px;background:#f0f0f0;border:1px solid #d9d9d9;border-bottom:none"></div>
<div class="a " style="left:274.50px;top:126.20px;line-height:10px;white-space:nowrap;font-size:7.9px;letter-spacing:.49px;color:#222;-webkit-text-stroke:0">Start search</div>
<div class="a" style="left:326.00px;top:123.00px;width:34.40px;height:15.00px;background:#fff;border:1px solid #d9d9d9;border-bottom:none"></div>
<div class="a " style="left:331.00px;top:125.00px;line-height:10px;white-space:nowrap;font-size:7.9px;letter-spacing:.27px;color:#222;-webkit-text-stroke:0">Result</div>
<div class="a " style="left:600.00px;top:125.00px;line-height:10px;white-space:nowrap;font-size:7.9px;letter-spacing:.45px;color:#000;width:126.7px;text-align:right">Update user</div>
<div class="a " style="left:282.00px;top:147.60px;line-height:10px;white-space:nowrap;font-size:7.9px;letter-spacing:.5px;color:#000">Voortgang</div>
<div class="a" style="left:319.60px;top:146.20px;width:399.00px;height:12.00px;background:#e6e6e6"></div>
<div class="a " style="left:282.00px;top:163.60px;line-height:10px;white-space:nowrap;font-size:7.9px;letter-spacing:.52px;color:#000">Status</div>
<div class="a" style="left:319.60px;top:165.40px;width:335.00px;height:46.00px;background:#fff;border:1px solid #3c8fd8"></div>
<div class="a" style="left:323.6px;top:167px;font-size:7.6px;line-height:8.6px;letter-spacing:.45px;color:#000;white-space:nowrap">leesmap D:\Pictures\<br>Vergelijk 3.112 bestanden (5,4 GB)<br>949 vergelijkbare bestanden gevonden</div>
<div class="a" style="left:640.00px;top:165.90px;width:77.00px;height:18.60px;background:#cfcfcf"></div>
<div class="a" style="left:272.20px;top:217.10px;width:457.80px;height:249.90px;background:#fff;border-top:1px solid #a0a0a0;border-left:1px solid #a0a0a0"></div>
<div class="a" style="left:273.20px;top:218.10px;width:327.00px;height:238.70px;overflow:hidden">
<div class="a" style="left:0;top:0.90px;width:400px;height:12.00px;background:#fff"></div>
<div class="a" style="left:3.00px;top:3.55px;width:6.7px;height:6.6px;background:#0b7f3e;border:0.6px solid #b0a090"></div>
<div class="a" style="left:-13.20px;width:49.80px;top:1.85px;line-height:10px;text-align:right;font-size:7.3px;letter-spacing:.6px;color:#000;white-space:nowrap">></div>
<div class="a" style="left:44.40px;top:1.85px;line-height:10px;font-size:7.3px;letter-spacing:0.58px;color:#000;white-space:nowrap">1 juni 2020\15 aug.2019\15.08.2019.jpg</div>
<div class="a" style="left:0;top:12.80px;width:400px;height:12.00px;background:#fff"></div>
<div class="a" style="left:3.00px;top:15.45px;width:6.7px;height:6.6px;background:#0b7f3e;border:0.6px solid #b0a090"></div>
<div class="a" style="left:-13.20px;width:49.80px;top:13.75px;line-height:10px;text-align:right;font-size:7.3px;letter-spacing:.6px;color:#000;white-space:nowrap">99%</div>
<div class="a" style="left:44.40px;top:13.75px;line-height:10px;font-size:7.3px;letter-spacing:0.58px;color:#000;white-space:nowrap">Saved Pictures\15.08.2019.jpg</div>
<div class="a" style="left:0;top:24.70px;width:400px;height:12.00px;background:#c2e5ee"></div>
<div class="a" style="left:0;top:24.10px;width:400px;height:1.1px;background:#2a2a2a"></div>
<div class="a" style="left:3.00px;top:27.35px;width:6.7px;height:6.6px;background:#0b7f3e;border:0.6px solid #b0a090"></div>
<div class="a" style="left:-13.20px;width:49.80px;top:25.65px;line-height:10px;text-align:right;font-size:7.3px;letter-spacing:.6px;color:#000;white-space:nowrap">></div>
<div class="a" style="left:44.40px;top:25.65px;line-height:10px;font-size:7.3px;letter-spacing:0.58px;color:#000;white-space:nowrap">1 juni 2020\1aaaaaaa\P1060946.JPG</div>
<div class="a" style="left:0;top:36.60px;width:400px;height:12.00px;background:#c2e5ee"></div>
<div class="a" style="left:3.00px;top:39.25px;width:6.7px;height:6.6px;background:#0b7f3e;border:0.6px solid #b0a090"></div>
<div class="a" style="left:-13.20px;width:49.80px;top:37.55px;line-height:10px;text-align:right;font-size:7.3px;letter-spacing:.6px;color:#000;white-space:nowrap">97%</div>
<div class="a" style="left:44.40px;top:37.55px;line-height:10px;font-size:7.3px;letter-spacing:0.58px;color:#000;white-space:nowrap">Camera Roll\P1060946 (Klein) (Groot) (1).JPG</div>
<div class="a" style="left:0;top:48.50px;width:400px;height:12.00px;background:#c2e5ee"></div>
<div class="a" style="left:3.00px;top:51.15px;width:6.7px;height:6.6px;background:#0b7f3e;border:0.6px solid #b0a090"></div>
<div class="a" style="left:-13.20px;width:49.80px;top:49.45px;line-height:10px;text-align:right;font-size:7.3px;letter-spacing:.6px;color:#000;white-space:nowrap">97%</div>
<div class="a" style="left:44.40px;top:49.45px;line-height:10px;font-size:7.3px;letter-spacing:0.58px;color:#000;white-space:nowrap">Camera Roll\P1060946 (Klein) (Groot) (Groot).JPG</div>
<div class="a" style="left:0;top:60.40px;width:400px;height:12.00px;background:#c2e5ee"></div>
<div class="a" style="left:3.00px;top:63.05px;width:6.7px;height:6.6px;background:#0b7f3e;border:0.6px solid #b0a090"></div>
<div class="a" style="left:-13.20px;width:49.80px;top:61.35px;line-height:10px;text-align:right;font-size:7.3px;letter-spacing:.6px;color:#1f1ff5;white-space:nowrap">97%</div>
<div class="a" style="left:44.40px;top:61.35px;line-height:10px;font-size:7.3px;letter-spacing:0.58px;color:#1f1ff5;white-space:nowrap">Camera Roll\P1060946 (Klein) (Groot).JPG</div>
<div class="a" style="left:0;top:72.30px;width:400px;height:12.00px;background:#c2e5ee"></div>
<div class="a" style="left:3.00px;top:74.95px;width:6.7px;height:6.6px;background:#0b7f3e;border:0.6px solid #b0a090"></div>
<div class="a" style="left:-13.20px;width:49.80px;top:73.25px;line-height:10px;text-align:right;font-size:7.3px;letter-spacing:.6px;color:#000;white-space:nowrap">95%</div>
<div class="a" style="left:44.40px;top:73.25px;line-height:10px;font-size:7.3px;letter-spacing:0.58px;color:#000;white-space:nowrap">Camera Roll\P1060946 (Klein).JPG</div>
<div class="a" style="left:0;top:84.20px;width:400px;height:12.00px;background:#c2e5ee"></div>
<div class="a" style="left:3.00px;top:86.85px;width:6.7px;height:6.6px;background:#0b7f3e;border:0.6px solid #b0a090"></div>
<div class="a" style="left:-13.20px;width:49.80px;top:85.15px;line-height:10px;text-align:right;font-size:7.3px;letter-spacing:.6px;color:#000;white-space:nowrap">95%</div>
<div class="a" style="left:44.40px;top:85.15px;line-height:10px;font-size:7.3px;letter-spacing:0.58px;color:#000;white-space:nowrap">Saved Pictures\P1060946 (Klein).JPG</div>
<div class="a" style="left:0;top:96.10px;width:400px;height:12.00px;background:#c2e5ee"></div>
<div class="a" style="left:3.00px;top:98.75px;width:6.7px;height:6.6px;background:#0b7f3e;border:0.6px solid #b0a090"></div>
<div class="a" style="left:-13.20px;width:49.80px;top:97.05px;line-height:10px;text-align:right;font-size:7.3px;letter-spacing:.6px;color:#000;white-space:nowrap">99%</div>
<div class="a" style="left:44.40px;top:97.05px;line-height:10px;font-size:7.3px;letter-spacing:0.58px;color:#000;white-space:nowrap">Saved Pictures\P1060946.JPG</div>
<div class="a" style="left:0;top:108.00px;width:400px;height:12.00px;background:#fff"></div>
<div class="a" style="left:0;top:107.40px;width:400px;height:1.1px;background:#2a2a2a"></div>
<div class="a" style="left:3.00px;top:110.65px;width:6.7px;height:6.6px;background:#0b7f3e;border:0.6px solid #b0a090"></div>
<div class="a" style="left:-13.20px;width:49.80px;top:108.95px;line-height:10px;text-align:right;font-size:7.3px;letter-spacing:.6px;color:#000;white-space:nowrap">></div>
<div class="a" style="left:44.40px;top:108.95px;line-height:10px;font-size:7.3px;letter-spacing:0.58px;color:#000;white-space:nowrap">1 juni 2020\20151\DSC_0523.JPG</div>
<div class="a" style="left:0;top:119.90px;width:400px;height:12.00px;background:#fff"></div>
<div class="a" style="left:3.00px;top:122.55px;width:6.7px;height:6.6px;background:#0b7f3e;border:0.6px solid #b0a090"></div>
<div class="a" style="left:-13.20px;width:49.80px;top:120.85px;line-height:10px;text-align:right;font-size:7.3px;letter-spacing:.6px;color:#000;white-space:nowrap">99%</div>
<div class="a" style="left:44.40px;top:120.85px;line-height:10px;font-size:7.3px;letter-spacing:0.45px;color:#000;white-space:nowrap">1 juni 2020\KERK HEILIGE FAMILIE\LOKEREN 2014\DSC_0523.JPG</div>
<div class="a" style="left:0;top:131.80px;width:400px;height:12.00px;background:#fff"></div>
<div class="a" style="left:3.00px;top:134.45px;width:6.7px;height:6.6px;background:#0b7f3e;border:0.6px solid #b0a090"></div>
<div class="a" style="left:-13.20px;width:49.80px;top:132.75px;line-height:10px;text-align:right;font-size:7.3px;letter-spacing:.6px;color:#000;white-space:nowrap">99%</div>
<div class="a" style="left:44.40px;top:132.75px;line-height:10px;font-size:7.3px;letter-spacing:0.58px;color:#000;white-space:nowrap">Camera Roll\DSC_0523 (Klein) (Groot) (1).JPG</div>
<div class="a" style="left:0;top:143.70px;width:400px;height:12.00px;background:#fff"></div>
<div class="a" style="left:3.00px;top:146.35px;width:6.7px;height:6.6px;background:#0b7f3e;border:0.6px solid #b0a090"></div>
<div class="a" style="left:-13.20px;width:49.80px;top:144.65px;line-height:10px;text-align:right;font-size:7.3px;letter-spacing:.6px;color:#000;white-space:nowrap">99%</div>
<div class="a" style="left:44.40px;top:144.65px;line-height:10px;font-size:7.3px;letter-spacing:0.58px;color:#000;white-space:nowrap">Camera Roll\DSC_0523 (Klein) (Groot) (Groot).JPG</div>
<div class="a" style="left:0;top:155.60px;width:400px;height:12.00px;background:#fff"></div>
<div class="a" style="left:3.00px;top:158.25px;width:6.7px;height:6.6px;background:#0b7f3e;border:0.6px solid #b0a090"></div>
<div class="a" style="left:-13.20px;width:49.80px;top:156.55px;line-height:10px;text-align:right;font-size:7.3px;letter-spacing:.6px;color:#000;white-space:nowrap">99%</div>
<div class="a" style="left:44.40px;top:156.55px;line-height:10px;font-size:7.3px;letter-spacing:0.58px;color:#000;white-space:nowrap">Camera Roll\DSC_0523 (Klein) (Groot).JPG</div>
<div class="a" style="left:0;top:167.50px;width:400px;height:12.00px;background:#fff"></div>
<div class="a" style="left:3.00px;top:170.15px;width:6.7px;height:6.6px;background:#0b7f3e;border:0.6px solid #b0a090"></div>
<div class="a" style="left:-13.20px;width:49.80px;top:168.45px;line-height:10px;text-align:right;font-size:7.3px;letter-spacing:.6px;color:#000;white-space:nowrap">98%</div>
<div class="a" style="left:44.40px;top:168.45px;line-height:10px;font-size:7.3px;letter-spacing:0.58px;color:#000;white-space:nowrap">Saved Pictures\DSC_0523 (Klein).JPG</div>
<div class="a" style="left:0;top:179.40px;width:400px;height:12.00px;background:#fff"></div>
<div class="a" style="left:3.00px;top:182.05px;width:6.7px;height:6.6px;background:#0b7f3e;border:0.6px solid #b0a090"></div>
<div class="a" style="left:-13.20px;width:49.80px;top:180.35px;line-height:10px;text-align:right;font-size:7.3px;letter-spacing:.6px;color:#000;white-space:nowrap">99%</div>
<div class="a" style="left:44.40px;top:180.35px;line-height:10px;font-size:7.3px;letter-spacing:0.58px;color:#000;white-space:nowrap">Saved Pictures\DSC_0523.JPG</div>
<div class="a" style="left:0;top:191.30px;width:400px;height:12.00px;background:#c2e5ee"></div>
<div class="a" style="left:0;top:190.70px;width:400px;height:1.1px;background:#2a2a2a"></div>
<div class="a" style="left:3.00px;top:193.95px;width:6.7px;height:6.6px;background:#0b7f3e;border:0.6px solid #b0a090"></div>
<div class="a" style="left:-13.20px;width:49.80px;top:192.25px;line-height:10px;text-align:right;font-size:7.3px;letter-spacing:.6px;color:#000;white-space:nowrap">></div>
<div class="a" style="left:44.40px;top:192.25px;line-height:10px;font-size:7.3px;letter-spacing:0.58px;color:#000;white-space:nowrap">1 juni 2020\20151\DSC_0540.JPG</div>
<div class="a" style="left:0;top:203.20px;width:400px;height:12.00px;background:#c2e5ee"></div>
<div class="a" style="left:3.00px;top:205.85px;width:6.7px;height:6.6px;background:#0b7f3e;border:0.6px solid #b0a090"></div>
<div class="a" style="left:-13.20px;width:49.80px;top:204.15px;line-height:10px;text-align:right;font-size:7.3px;letter-spacing:.6px;color:#000;white-space:nowrap">99%</div>
<div class="a" style="left:44.40px;top:204.15px;line-height:10px;font-size:7.3px;letter-spacing:0.45px;color:#000;white-space:nowrap">1 juni 2020\KERK HEILIGE FAMILIE\LOKEREN 2014\DSC_0540.JPG</div>
<div class="a" style="left:0;top:215.10px;width:400px;height:12.00px;background:#c2e5ee"></div>
<div class="a" style="left:3.00px;top:217.75px;width:6.7px;height:6.6px;background:#0b7f3e;border:0.6px solid #b0a090"></div>
<div class="a" style="left:-13.20px;width:49.80px;top:216.05px;line-height:10px;text-align:right;font-size:7.3px;letter-spacing:.6px;color:#000;white-space:nowrap">99%</div>
<div class="a" style="left:44.40px;top:216.05px;line-height:10px;font-size:7.3px;letter-spacing:0.58px;color:#000;white-space:nowrap">Camera Roll\DSC_0540 (Klein) (Groot) (1).JPG</div>
<div class="a" style="left:0;top:227.00px;width:400px;height:12.00px;background:#c2e5ee"></div>
<div class="a" style="left:3.00px;top:229.65px;width:6.7px;height:6.6px;background:#0b7f3e;border:0.6px solid #b0a090"></div>
<div class="a" style="left:-13.20px;width:49.80px;top:227.95px;line-height:10px;text-align:right;font-size:7.3px;letter-spacing:.6px;color:#000;white-space:nowrap">99%</div>
<div class="a" style="left:44.40px;top:227.95px;line-height:10px;font-size:7.3px;letter-spacing:0.58px;color:#000;white-space:nowrap">Camera Roll\DSC_0540 (Klein) (Groot) (Groot).JPG</div>
<div class="a" style="left:0;top:238.90px;width:400px;height:12.00px;background:#c2e5ee"></div>
<div class="a" style="left:3.00px;top:241.55px;width:6.7px;height:6.6px;background:#0b7f3e;border:0.6px solid #b0a090"></div>
<div class="a" style="left:-13.20px;width:49.80px;top:239.85px;line-height:10px;text-align:right;font-size:7.3px;letter-spacing:.6px;color:#000;white-space:nowrap">99%</div>
<div class="a" style="left:44.40px;top:239.85px;line-height:10px;font-size:7.3px;letter-spacing:0.58px;color:#000;white-space:nowrap">Camera Roll\DSC_0540 (Klein) (Groot).JPG</div>
</div>
<div class="a" style="left:273.20px;top:456.80px;width:327.00px;height:10.00px;background:#f0f0f0"></div>
<div class="a" style="left:283.40px;top:457.80px;width:211.00px;height:8.00px;background:#cdcdcd"></div>
<div class="a " style="left:276.30px;top:456.50px;line-height:10px;white-space:nowrap;font-size:9px;color:#333;font-weight:bold">&lsaquo;</div>
<div class="a " style="left:593.50px;top:456.30px;line-height:10px;white-space:nowrap;font-size:9px;color:#333;font-weight:bold">&rsaquo;</div>
<div class="a" style="left:600.20px;top:218.10px;width:3.30px;height:248.90px;background:#c8cfc8;border-left:1px solid #e8e8e8;border-right:1px solid #e8e8e8"></div>
<div class="a" style="left:603.5px;top:218.10px;width:113.70px;height:248.90px;overflow:hidden">
<div class="a" style="left:0;top:0.90px;width:120px;height:12.00px;background:#fff"></div>
<div class="a" style="left:4.40px;top:1.85px;line-height:10px;font-size:7.3px;letter-spacing:.85px;color:#000;white-space:nowrap">2019-08-16</div>
<div class="a" style="left:0;width:110.30px;top:1.85px;line-height:10px;text-align:right;font-size:7.3px;letter-spacing:.45px;color:#000;white-space:nowrap">941 KB</div>
<div class="a" style="left:0;top:12.80px;width:120px;height:12.00px;background:#fff"></div>
<div class="a" style="left:4.40px;top:13.75px;line-height:10px;font-size:7.3px;letter-spacing:.85px;color:#000;white-space:nowrap">2019-08-16</div>
<div class="a" style="left:0;width:110.30px;top:13.75px;line-height:10px;text-align:right;font-size:7.3px;letter-spacing:.45px;color:#000;white-space:nowrap">941 KB</div>
<div class="a" style="left:0;top:24.70px;width:120px;height:12.00px;background:#c2e5ee"></div>
<div class="a" style="left:0;top:24.10px;width:120px;height:1.1px;background:#2a2a2a"></div>
<div class="a" style="left:4.40px;top:25.65px;line-height:10px;font-size:7.3px;letter-spacing:.85px;color:#000;white-space:nowrap">2016-11-23</div>
<div class="a" style="left:0;width:110.30px;top:25.65px;line-height:10px;text-align:right;font-size:7.3px;letter-spacing:.45px;color:#000;white-space:nowrap">2.310 KB</div>
<div class="a" style="left:0;top:36.60px;width:120px;height:12.00px;background:#c2e5ee"></div>
<div class="a" style="left:4.40px;top:37.55px;line-height:10px;font-size:7.3px;letter-spacing:.85px;color:#000;white-space:nowrap">2020-07-04</div>
<div class="a" style="left:0;width:110.30px;top:37.55px;line-height:10px;text-align:right;font-size:7.3px;letter-spacing:.45px;color:#000;white-space:nowrap">342 KB</div>
<div class="a" style="left:0;top:48.50px;width:120px;height:12.00px;background:#c2e5ee"></div>
<div class="a" style="left:4.40px;top:49.45px;line-height:10px;font-size:7.3px;letter-spacing:.85px;color:#000;white-space:nowrap">2020-07-04</div>
<div class="a" style="left:0;width:110.30px;top:49.45px;line-height:10px;text-align:right;font-size:7.3px;letter-spacing:.45px;color:#000;white-space:nowrap">342 KB</div>
<div class="a" style="left:0;top:60.40px;width:120px;height:12.00px;background:#c2e5ee"></div>
<div class="a" style="left:4.40px;top:61.35px;line-height:10px;font-size:7.3px;letter-spacing:.85px;color:#1f1ff5;white-space:nowrap">2020-07-02</div>
<div class="a" style="left:0;width:110.30px;top:61.35px;line-height:10px;text-align:right;font-size:7.3px;letter-spacing:.45px;color:#1f1ff5;white-space:nowrap">342 KB</div>
<div class="a" style="left:0;top:72.30px;width:120px;height:12.00px;background:#c2e5ee"></div>
<div class="a" style="left:4.40px;top:73.25px;line-height:10px;font-size:7.3px;letter-spacing:.85px;color:#000;white-space:nowrap">2020-07-02</div>
<div class="a" style="left:0;width:110.30px;top:73.25px;line-height:10px;text-align:right;font-size:7.3px;letter-spacing:.45px;color:#000;white-space:nowrap">129 KB</div>
<div class="a" style="left:0;top:84.20px;width:120px;height:12.00px;background:#c2e5ee"></div>
<div class="a" style="left:4.40px;top:85.15px;line-height:10px;font-size:7.3px;letter-spacing:.85px;color:#000;white-space:nowrap">2020-07-02</div>
<div class="a" style="left:0;width:110.30px;top:85.15px;line-height:10px;text-align:right;font-size:7.3px;letter-spacing:.45px;color:#000;white-space:nowrap">129 KB</div>
<div class="a" style="left:0;top:96.10px;width:120px;height:12.00px;background:#c2e5ee"></div>
<div class="a" style="left:4.40px;top:97.05px;line-height:10px;font-size:7.3px;letter-spacing:.85px;color:#000;white-space:nowrap">2016-11-23</div>
<div class="a" style="left:0;width:110.30px;top:97.05px;line-height:10px;text-align:right;font-size:7.3px;letter-spacing:.45px;color:#000;white-space:nowrap">2.310 KB</div>
<div class="a" style="left:0;top:108.00px;width:120px;height:12.00px;background:#fff"></div>
<div class="a" style="left:0;top:107.40px;width:120px;height:1.1px;background:#2a2a2a"></div>
<div class="a" style="left:4.40px;top:108.95px;line-height:10px;font-size:7.3px;letter-spacing:.85px;color:#000;white-space:nowrap">2014-08-28</div>
<div class="a" style="left:0;width:110.30px;top:108.95px;line-height:10px;text-align:right;font-size:7.3px;letter-spacing:.45px;color:#000;white-space:nowrap">4.601 KB</div>
<div class="a" style="left:0;top:119.90px;width:120px;height:12.00px;background:#fff"></div>
<div class="a" style="left:4.40px;top:120.85px;line-height:10px;font-size:7.3px;letter-spacing:.85px;color:#000;white-space:nowrap">2014-06-08</div>
<div class="a" style="left:0;width:110.30px;top:120.85px;line-height:10px;text-align:right;font-size:7.3px;letter-spacing:.45px;color:#000;white-space:nowrap">4.653 KB</div>
<div class="a" style="left:0;top:131.80px;width:120px;height:12.00px;background:#fff"></div>
<div class="a" style="left:4.40px;top:132.75px;line-height:10px;font-size:7.3px;letter-spacing:.85px;color:#000;white-space:nowrap">2020-07-04</div>
<div class="a" style="left:0;width:110.30px;top:132.75px;line-height:10px;text-align:right;font-size:7.3px;letter-spacing:.45px;color:#000;white-space:nowrap">225 KB</div>
<div class="a" style="left:0;top:143.70px;width:120px;height:12.00px;background:#fff"></div>
<div class="a" style="left:4.40px;top:144.65px;line-height:10px;font-size:7.3px;letter-spacing:.85px;color:#000;white-space:nowrap">2020-07-04</div>
<div class="a" style="left:0;width:110.30px;top:144.65px;line-height:10px;text-align:right;font-size:7.3px;letter-spacing:.45px;color:#000;white-space:nowrap">226 KB</div>
<div class="a" style="left:0;top:155.60px;width:120px;height:12.00px;background:#fff"></div>
<div class="a" style="left:4.40px;top:156.55px;line-height:10px;font-size:7.3px;letter-spacing:.85px;color:#000;white-space:nowrap">2020-07-02</div>
<div class="a" style="left:0;width:110.30px;top:156.55px;line-height:10px;text-align:right;font-size:7.3px;letter-spacing:.45px;color:#000;white-space:nowrap">225 KB</div>
<div class="a" style="left:0;top:167.50px;width:120px;height:12.00px;background:#fff"></div>
<div class="a" style="left:4.40px;top:168.45px;line-height:10px;font-size:7.3px;letter-spacing:.85px;color:#000;white-space:nowrap">2020-07-02</div>
<div class="a" style="left:0;width:110.30px;top:168.45px;line-height:10px;text-align:right;font-size:7.3px;letter-spacing:.45px;color:#000;white-space:nowrap">88 KB</div>
<div class="a" style="left:0;top:179.40px;width:120px;height:12.00px;background:#fff"></div>
<div class="a" style="left:4.40px;top:180.35px;line-height:10px;font-size:7.3px;letter-spacing:.85px;color:#000;white-space:nowrap">2014-08-28</div>
<div class="a" style="left:0;width:110.30px;top:180.35px;line-height:10px;text-align:right;font-size:7.3px;letter-spacing:.45px;color:#000;white-space:nowrap">4.601 KB</div>
<div class="a" style="left:0;top:191.30px;width:120px;height:12.00px;background:#c2e5ee"></div>
<div class="a" style="left:0;top:190.70px;width:120px;height:1.1px;background:#2a2a2a"></div>
<div class="a" style="left:4.40px;top:192.25px;line-height:10px;font-size:7.3px;letter-spacing:.85px;color:#000;white-space:nowrap">2014-08-28</div>
<div class="a" style="left:0;width:110.30px;top:192.25px;line-height:10px;text-align:right;font-size:7.3px;letter-spacing:.45px;color:#000;white-space:nowrap">4.690 KB</div>
<div class="a" style="left:0;top:203.20px;width:120px;height:12.00px;background:#c2e5ee"></div>
<div class="a" style="left:4.40px;top:204.15px;line-height:10px;font-size:7.3px;letter-spacing:.85px;color:#000;white-space:nowrap">2014-07-06</div>
<div class="a" style="left:0;width:110.30px;top:204.15px;line-height:10px;text-align:right;font-size:7.3px;letter-spacing:.45px;color:#000;white-space:nowrap">4.721 KB</div>
<div class="a" style="left:0;top:215.10px;width:120px;height:12.00px;background:#c2e5ee"></div>
<div class="a" style="left:4.40px;top:216.05px;line-height:10px;font-size:7.3px;letter-spacing:.85px;color:#000;white-space:nowrap">2020-07-04</div>
<div class="a" style="left:0;width:110.30px;top:216.05px;line-height:10px;text-align:right;font-size:7.3px;letter-spacing:.45px;color:#000;white-space:nowrap">220 KB</div>
<div class="a" style="left:0;top:227.00px;width:120px;height:12.00px;background:#c2e5ee"></div>
<div class="a" style="left:4.40px;top:227.95px;line-height:10px;font-size:7.3px;letter-spacing:.85px;color:#000;white-space:nowrap">2020-07-04</div>
<div class="a" style="left:0;width:110.30px;top:227.95px;line-height:10px;text-align:right;font-size:7.3px;letter-spacing:.45px;color:#000;white-space:nowrap">220 KB</div>
<div class="a" style="left:0;top:238.90px;width:120px;height:12.00px;background:#c2e5ee"></div>
<div class="a" style="left:4.40px;top:239.85px;line-height:10px;font-size:7.3px;letter-spacing:.85px;color:#000;white-space:nowrap">2020-07-02</div>
<div class="a" style="left:0;width:110.30px;top:239.85px;line-height:10px;text-align:right;font-size:7.3px;letter-spacing:.45px;color:#000;white-space:nowrap">220 KB</div>
</div>
<div class="a" style="left:717.20px;top:218.10px;width:12.60px;height:248.90px;background:#f0f0f0;border-left:1px solid #8f9499"></div>
<div class="a" style="left:719.20px;top:228.00px;width:7.60px;height:10.00px;background:#cdcdcd"></div>
<svg class="a" style="left:720px;top:221.5px" width="6" height="4" viewBox="0 0 6 4"><path d="M.6 3.3 L3 1 L5.4 3.3" stroke="#404040" stroke-width="1.1" fill="none"/></svg>
<svg class="a" style="left:720px;top:460.5px" width="6" height="4" viewBox="0 0 6 4"><path d="M.6 .7 L3 3 L5.4 .7" stroke="#404040" stroke-width="1.1" fill="none"/></svg>
<div class="a" style="left:276.90px;top:471.50px;width:137.70px;height:19.20px;background:#e1e1e1;border:1px solid #c4c4c4"></div>
<svg class="a" style="left:294px;top:476px" width="12" height="10" viewBox="0 0 12 10"><path d="M.5 1.5 h3.5 l1 1 h5 v6.5 h-9.5z" fill="#d9b038"/><path d="M2 4 h9.5 l-1.8 5.2 h-9.2z" fill="#fbe58a" stroke="#d8b84a" stroke-width=".4"/></svg>
<div class="a " style="left:312.70px;top:476.60px;line-height:10px;white-space:nowrap;font-size:8.2px;font-weight:bold;letter-spacing:.37px;color:#000;-webkit-text-stroke:.2px #000">Selection by folders</div>
<div class="a" style="left:422.50px;top:471.50px;width:133.00px;height:19.20px;background:#e1e1e1;border:1px solid #c4c4c4"></div>
<div class="a " style="left:439.40px;top:476.60px;line-height:10px;white-space:nowrap;font-size:8.2px;font-weight:bold;letter-spacing:.37px;color:#000;-webkit-text-stroke:.2px #000">Selection by properties</div>
<div class="a" style="left:563.00px;top:471.50px;width:164.50px;height:19.20px;background:#e1e1e1;border:1px solid #c4c4c4"></div>
<svg class="a" style="left:562px;top:474px" width="13" height="14" viewBox="0 0 13 14"><path d="M2 3.5 L11 3 L10 13 Q6.5 13.8 3 13Z" fill="#d8dcd8" stroke="#777" stroke-width=".6"/><path d="M1.5 2 L11.5 1.5 L11.3 3.5 L1.7 4Z" fill="#9aa09a" stroke="#555" stroke-width=".4"/><path d="M4.5 6 L6.5 5 L8 6.5 L7 8Z M8.5 7.5 L9 10 L6.5 11 Z M4 8.5 L5.5 11 L3.7 10.5Z" fill="#2aa040"/><path d="M4 4 V12.5 M6.5 4 V13 M9 4 V12.5" stroke="#999" stroke-width=".3"/></svg>
<div class="a" style="left:576px;top:476.6px;width:151px;overflow:hidden;line-height:10px;white-space:nowrap;font-size:8.2px;font-weight:bold;letter-spacing:.5px;color:#000;-webkit-text-stroke:.2px #000">Verwijder geselecteerde bestanden</div>
<div class="a" style="left:270.50px;top:494.00px;width:457.50px;height:1.00px;background:#a0a0a0"></div>
<div class="a" style="left:270.50px;top:495.00px;width:459.50px;height:13.00px;background:#f0f0f0;border-top:1px solid #fff"></div>
<div class="a" style="left:270.50px;top:496.50px;width:459.50px;height:1.20px;background:#dcdcdc"></div>
<div class="a" style="left:270.50px;top:507.30px;width:459.50px;height:0.70px;background:#fff"></div>
<div class="a" style="left:727.00px;top:505.50px;width:0.80px;height:0.80px;background:#b0b0b0"></div>
<div class="a" style="left:727.00px;top:503.30px;width:0.80px;height:0.80px;background:#b0b0b0"></div>
<div class="a" style="left:724.80px;top:505.50px;width:0.80px;height:0.80px;background:#b0b0b0"></div>
<div class="a" style="left:727.00px;top:501.20px;width:0.80px;height:0.80px;background:#b0b0b0"></div>
<div class="a" style="left:724.80px;top:503.30px;width:0.80px;height:0.80px;background:#b0b0b0"></div>
<div class="a" style="left:722.60px;top:505.50px;width:0.80px;height:0.80px;background:#b0b0b0"></div>
<div class="a" style="left:473.00px;top:123.60px;width:225.00px;height:112.00px;background:linear-gradient(#fbf8ea,#e6dbb8);box-shadow:1px 2px 4px rgba(0,0,0,.35)"></div>
<div class="a" style="left:473.00px;top:123.60px;width:225.00px;height:15.20px;background:#fff"></div>
<div class="a " style="left:477.00px;top:126.00px;line-height:10px;white-space:nowrap;font-size:7.1px;color:#999;letter-spacing:.3px">Legend</div>
<div class="a" style="left:686.00px;top:125.50px;width:11.00px;height:10.20px;background:#e5e5e5"></div>
<div class="a " style="left:690.00px;top:125.50px;line-height:10px;white-space:nowrap;font-size:6px;color:#fff">&times;</div>
<div class="a" style="left:486.00px;top:149.60px;width:6.00px;height:5.80px;background:#0b7a3b"></div>
<div class="a" style="left:501.6px;top:147.5px;font-size:7.3px;line-height:9.6px;letter-spacing:.75px;color:#000;white-space:nowrap">File will not be removed (default setting)<br>but selection can be changed to a "delete"<br>selection with the function &raquo;Selection by ...&laquo;</div>
<div class="a" style="left:486.00px;top:186.00px;width:6.00px;height:6.00px;background:#000"></div>
<div class="a " style="left:501.60px;top:183.40px;line-height:10px;white-space:nowrap;font-size:7.3px;letter-spacing:.75px;color:#000">File will not be removed (manually set)</div>
<svg class="a" style="left:485px;top:201px" width="8" height="8" viewBox="0 0 8 8"><rect x="0" y="0" width="8" height="8" rx="2.2" fill="#c01818"/><path d="M2.3 2.3 L5.7 5.7 M5.7 2.3 L2.3 5.7" stroke="#fff" stroke-width="1.2"/></svg>
<div class="a " style="left:501.60px;top:200.00px;line-height:10px;white-space:nowrap;font-size:7.3px;letter-spacing:.75px;color:#000">Delete/move file</div>
<svg class="a" style="left:485px;top:218px" width="8" height="8" viewBox="0 0 8 8"><rect x=".3" y=".3" width="7.4" height="7.4" fill="#fafafa" stroke="#ccc" stroke-width=".5"/><path d="M2.2 2.2 L5.8 5.8 M5.8 2.2 L2.2 5.8" stroke="#999" stroke-width=".8"/></svg>
<div class="a " style="left:501.60px;top:216.60px;line-height:10px;white-space:nowrap;font-size:7.3px;letter-spacing:.75px;color:#000">File has already been deleted</div>
<div class="a" style="left:744.70px;top:88.00px;width:178.00px;height:416.70px;background:#fdf5e4;box-shadow:0 1px 6px rgba(0,0,0,.3)"></div>
<div class="a" style="left:744.70px;top:88.00px;width:178.00px;height:18.00px;background:#fff"></div>
<div class="a " style="left:751.00px;top:92.40px;line-height:10px;white-space:nowrap;font-size:7.1px;color:#999;letter-spacing:.2px">Tips</div>
<div class="a" style="left:911.00px;top:92.00px;width:12.00px;height:11.70px;background:#e8e8e8"></div>
<div class="a " style="left:744.70px;top:114.40px;line-height:10px;white-space:nowrap;font-size:7.6px;font-weight:bold;color:#111;width:178px;text-align:center;letter-spacing:.4px">Tips</div>
<div class="a" style="left:749.50px;top:132.90px;width:168.30px;height:121.90px;background:#fcebcf"></div>
<div class="a " style="left:752.80px;top:136.50px;line-height:10px;white-space:nowrap;font-size:7.6px;font-weight:bold;letter-spacing:.69px;color:#000;-webkit-text-stroke:.1px #000">Number One Choice</div>
<div class="a" style="left:752.8px;top:147.45px;font-size:7.3px;line-height:9.5px;letter-spacing:.77px;color:#000;white-space:nowrap">From the list of results, select the<br>redundant files you wish to delete or<br>move. Select the checkbox in front of<br>the relevant files to mark them for<br>deletion (red).<br>&nbsp;<br>Alternatively you can use the function<br>"Selection by folders". There please<br>define the folders (and subfolders) in<br>which you want Anti-Twin to delete<br>duplicate files.</div>
<div class="a" style="left:749.50px;top:263.90px;width:168.30px;height:25.10px;background:#fcebcf"></div>
<div class="a " style="left:752.80px;top:267.40px;line-height:10px;white-space:nowrap;font-size:7.3px;letter-spacing:.77px;color:#000">Find more information online:</div>
<div class="a " style="left:752.80px;top:276.90px;line-height:10px;white-space:nowrap;font-size:7.3px;letter-spacing:.77px;color:#1a1ae0;text-decoration:underline">Select for Deletion</div>
<svg class="a" style="left:894.5px;top:503.5px" width="44" height="44" viewBox="0 0 44 44"><path d="M7 1 H41.5 Q43 1 43 2.5 V41.5 Q43 43 41.5 43 H2.5 Q1 43 1 41.5 V8.5 Q1 7 2.5 7 H7Z" fill="#1c1c1c" stroke="#c9c4b8" stroke-width="1.2"/><defs><linearGradient id="wg" x1="0" y1="0" x2="0" y2="1"><stop offset="0" stop-color="#2a2a2c"/><stop offset="1" stop-color="#5e646c"/></linearGradient></defs><rect x="10" y="10" width="30.5" height="30" fill="url(#wg)"/><rect x="13.5" y="17.2" width="22.5" height="15" fill="#111"/><path d="M24 4.5 l-2.2 2.5 h4.4z" fill="#ccc"/><path d="M4 25 l2.5 -2.2 v4.4z" fill="#ccc"/><g fill="#8a8a8a" opacity=".8"><rect x="16" y="20" width="1" height="1"/><rect x="19.5" y="20" width="1" height="1"/><rect x="23" y="20" width="1" height="1"/><rect x="26.5" y="20" width="1" height="1"/><rect x="30" y="20" width="1" height="1"/><rect x="16" y="24" width="1" height="1"/><rect x="19.5" y="24" width="1" height="1" fill="#c44"/><rect x="23" y="24" width="1" height="1"/><rect x="26.5" y="24" width="1" height="1" fill="#4ac"/><rect x="30" y="24" width="1" height="1"/><rect x="19.5" y="28" width="1" height="1" fill="#4ac"/><rect x="23" y="28" width="1" height="1"/></g></svg>
<div class="a" style="left:0.00px;top:600.80px;width:1000.00px;height:24.20px;background:#d3dfea;border-top:0.8px solid #e2eaf2"></div>
<div class="a" style="left:321.00px;top:601.00px;width:29.00px;height:24.00px;background:#eaeff4"></div>
<div class="a" style="left:321.00px;top:623.30px;width:29.00px;height:1.70px;background:#1a6fc0"></div>
<svg class="a" style="left:9px;top:607.8px" width="10.2" height="10.4" viewBox="0 0 10.2 10.4"><path d="M0 1.4 L4.3 .8 V4.8 H0Z M5 .7 L10.2 0 V4.8 H5Z M0 5.6 H4.3 V9.6 L0 9Z M5 5.6 H10.2 V10.4 L5 9.7Z" fill="#000"/></svg>
<svg class="a" style="left:37.5px;top:607px" width="11" height="11.5" viewBox="0 0 11 11.5"><circle cx="6.2" cy="4.6" r="3.8" fill="none" stroke="#111" stroke-width="1"/><path d="M3.5 7.4 L.6 10.8" stroke="#111" stroke-width="1.1"/></svg>
<svg class="a" style="left:66.6px;top:607.8px" width="12.6" height="10.4" viewBox="0 0 12.6 10.4"><path d="M0 0 H5 L6 1.3 H12.6 V10.4 H0Z" fill="#f3c142"/><path d="M0 2 H12.6 V10.4 H0Z" fill="#fbd35c"/><path d="M3 6 H9.6 V10.4 H8 V7.6 H4.6 V10.4 H3Z" fill="#2f8ee0"/></svg>
<svg class="a" style="left:95.6px;top:606.3px" width="13.4" height="13.4" viewBox="0 0 13.4 13.4"><circle cx="6.7" cy="6.7" r="6.5" fill="#db4437"/><path d="M6.7 6.7 L1.1 3.5 A6.5 6.5 0 0 0 6.7 13.2Z" fill="#0f9d58"/><path d="M6.7 6.7 L6.7 13.2 A6.5 6.5 0 0 0 12.3 3.5Z" fill="#f4b400"/><circle cx="6.7" cy="6.7" r="2.9" fill="#fff"/><circle cx="6.7" cy="6.7" r="2.2" fill="#4285f4"/></svg>
<svg class="a" style="left:124px;top:606px" width="13.5" height="13.5" viewBox="0 0 13.5 13.5"><path d="M1 1 H11 V11 H1Z" fill="#9cbcb8"/><path d="M1 1 H5 V12 H1Z" fill="#3f7f78"/><rect x="4" y="2.5" width="6" height="9" fill="#f8faf9"/><rect x="5" y="4" width="4" height="1.6" fill="#2e7a70"/><rect x="5" y="7" width="4" height="1.2" fill="#5a9a90"/><rect x="7.5" y="5" width="5.5" height="8" fill="#f3f6f5" stroke="#c8d8d4" stroke-width=".4"/><path d="M8.5 7 h3.5 M8.5 9 h3.5 M8.5 11 h3.5" stroke="#5c9a8a" stroke-width=".7"/></svg>
<svg class="a" style="left:154px;top:606.6px" width="13" height="12.6" viewBox="0 0 13 12.6"><rect x=".3" y=".3" width="12.4" height="12" fill="#b83030"/><rect x="1.8" y="1.8" width="9.4" height="9" fill="#f2d6d6"/><rect x="2.5" y="2.5" width="8" height="7.6" fill="#e8a8a8"/><path d="M3.5 4 L6 8.5 L10 3" stroke="#fff" stroke-width="1.2" fill="none"/><path d="M4 4.5 L6 8" stroke="#c03a3a" stroke-width=".7"/></svg>
<svg class="a" style="left:182.8px;top:606px" width="13.2" height="13" viewBox="0 0 13.2 13"><rect x="1.2" y=".5" width="11" height="10" fill="#f6b8a0"/><rect x=".3" y="3" width="11.6" height="9.5" fill="#fbe4d8" stroke="#f0a080" stroke-width=".5"/><rect x="2" y="4.5" width="10" height="6.5" fill="#e8541e"/><rect x="3.3" y="6" width="2" height="3.5" fill="#fff"/><path d="M9.5 6.3 Q7 5.8 7 7.8 Q7 9.7 9.5 9.3" stroke="#fff" stroke-width="1.1" fill="none"/></svg>
<svg class="a" style="left:212px;top:606px" width="14" height="13.8" viewBox="0 0 14 13.8"><rect x="0" y="0" width="14" height="13.8" rx=".8" fill="#1c3e8a"/><path d="M2 11 L5.5 5 L7.2 8 L9 5 L12.4 11 H10.6 L9 8.2 L7.2 11 L5.5 8.2 L3.8 11Z" fill="#fff"/><rect x="10" y=".8" width="3" height="1.6" fill="#f5a623"/></svg>
<svg class="a" style="left:241px;top:606px" width="13.7" height="13" viewBox="0 0 13.7 13"><rect x=".5" y=".5" width="11" height="11" fill="#e8f2e0" stroke="#6ab84a" stroke-width="1"/><rect x="3" y="2.5" width="10.2" height="10" fill="#f4f8f0"/><path d="M4 4.5 L7.5 9 M7.5 4.5 L4 9" stroke="#2e7a2e" stroke-width="1.3"/><path d="M8.5 4.5 h3.5 M8.5 7 h3.5 M8.5 9.5 h3.5 M3.5 11.3 h8" stroke="#6aa860" stroke-width="1"/></svg>
<svg class="a" style="left:270.3px;top:606px" width="13" height="13" viewBox="0 0 13 13"><path d="M.5 1 L11 .5 V11.5 L.5 12Z" fill="#c8d4ee"/><path d="M.5 1 L3 .8 V12 L.5 12.3Z" fill="#2f5bc0"/><rect x="3.5" y="2.5" width="9" height="10" fill="#fbfcff" stroke="#c0cce8" stroke-width=".4"/><path d="M4.5 3.8 L5.7 7.6 L6.9 5 L8.1 7.6 L9.3 3.8" stroke="#2a4fb0" stroke-width="1" fill="none"/><path d="M9.5 4.5 h2 M9.5 6.3 h2 M4.5 9.3 h7 M4.5 11 h7" stroke="#3a62c0" stroke-width=".9"/></svg>
<svg class="a" style="left:299px;top:605.5px" width="15" height="15" viewBox="0 0 28 28"><defs><linearGradient id="eg2" x1="0" y1="0" x2="1" y2=".7"><stop offset="0" stop-color="#29b6f0"/><stop offset=".55" stop-color="#33c4b4"/><stop offset="1" stop-color="#62d84a"/></linearGradient></defs><path d="M0 12.5 Q1 0 14 0 Q28 0 28 14 Q28 19 24 20.5 Q18.5 21.5 17 18.5 Q16 15.5 19.5 13.5 Q16 8.5 10 9.5 Q4 10.5 0 14Z" fill="url(#eg2)"/><path d="M0 14 Q4 10.5 10 9.5 Q16 8.5 19.5 13.5 Q13 12 10.5 16 Q8 21 12 26 L14 28 Q0 27 0 14Z" fill="#1d84d8"/><path d="M14 28 Q8 23 10.5 17 Q12.5 12.5 19.5 13.5 Q16 15.5 17 18.5 Q18.5 21.5 24 20.5 Q26.5 20 27.5 17.5 Q26 27 14 28Z" fill="#0f4fa6"/></svg>
<svg class="a" style="left:328.8px;top:607px" width="14" height="12.6" viewBox="0 0 14 12.6"><circle cx="5.6" cy="5" r="4.3" fill="#bfe0f7" stroke="#7ab0d8" stroke-width=".8"/><circle cx="4.6" cy="3.8" r="1.8" fill="#eef8fe"/><path d="M8.8 8.2 L13 12" stroke="#7d848c" stroke-width="1.6" stroke-linecap="round"/></svg>
<svg class="a" style="left:844px;top:608px" width="9" height="9" viewBox="0 0 9 9"><circle cx="6" cy="2.3" r="1.9" fill="none" stroke="#222" stroke-width=".7"/><path d="M3.8 5.5 Q6 4 8.4 6.2" stroke="#222" stroke-width=".7" fill="none"/><path d="M.5 8.7 L1 5 L4.5 5 M1.5 6.8 H4 M1 8.7 L2 6.8 M4.5 8.7 L3.6 6.8" stroke="#222" stroke-width=".7" fill="none"/></svg>
<svg class="a" style="left:866px;top:610.5px" width="7" height="4.6" viewBox="0 0 7 4.6"><path d="M.4 4.2 L3.5 .8 L6.6 4.2" stroke="#222" stroke-width=".8" fill="none"/></svg>
<svg class="a" style="left:879px;top:609.5px" width="10" height="8" viewBox="0 0 10 8"><rect x="1.3" y=".5" width="8.2" height="5.8" fill="none" stroke="#222" stroke-width=".8"/><path d="M1.3 .5 V7.5 M3.5 7.4 H5.5" stroke="#222" stroke-width=".8"/><rect x=".2" y=".3" width="1.6" height="1.8" fill="#222"/></svg>
<svg class="a" style="left:893px;top:609.5px" width="10" height="7.5" viewBox="0 0 10 7.5"><path d="M.5 2.5 H2.2 L4.4 .4 V7.1 L2.2 5 H.5Z" fill="none" stroke="#222" stroke-width=".7"/><path d="M5.6 2.2 Q6.6 3.75 5.6 5.3 M7 1.2 Q8.6 3.75 7 6.3 M8.4 .3 Q10.4 3.75 8.4 7.2" stroke="#222" stroke-width=".7" fill="none"/></svg>
<div class="a " style="left:908.90px;top:607.90px;line-height:10px;white-space:nowrap;font-size:7px;color:#000;letter-spacing:.1px">NLD</div>
<div class="a " style="left:930.00px;top:602.60px;line-height:10px;white-space:nowrap;font-size:6.6px;color:#000;width:36px;text-align:center;letter-spacing:.05px">14:02</div>
<div class="a " style="left:930.00px;top:613.00px;line-height:10px;white-space:nowrap;font-size:6.6px;color:#000;width:35.5px;text-align:center;letter-spacing:-.05px">16/07/2020</div>
<svg class="a" style="left:975.2px;top:608px" width="9.8" height="10" viewBox="0 0 9.8 10"><path d="M.4 .4 H9.4 V7 H6 L4.9 9.3 L3.8 7 H.4Z" fill="none" stroke="#222" stroke-width=".75"/></svg>
<div class="a" style="left:997.40px;top:601.00px;width:0.60px;height:24.00px;background:#a8b4c0"></div>
</body></html>
